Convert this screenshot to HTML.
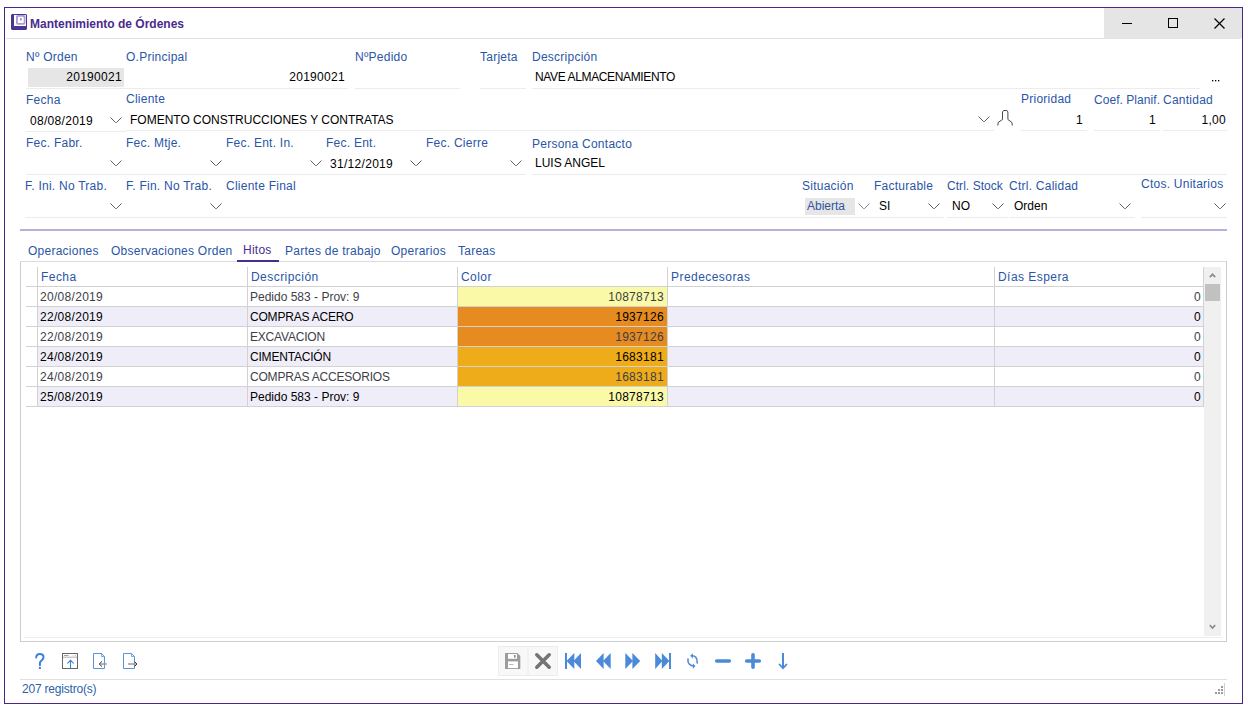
<!DOCTYPE html>
<html><head><meta charset="utf-8">
<style>
html,body{margin:0;padding:0;background:#fff;width:1248px;height:708px;overflow:hidden;position:relative;font-family:"Liberation Sans",sans-serif;}
.a{position:absolute}
.t{position:absolute;font-size:12px;line-height:14px;white-space:nowrap;color:#000}
.l{color:#2a55a8;letter-spacing:0.25px}
.r{text-align:right}
.ul{position:absolute;height:1px;background:#ececec}
.arr{position:absolute;width:12px;height:6px;overflow:visible}
.hl{position:absolute;height:1px;background:#d2d2d2}
.vl{position:absolute;width:1px;background:#d2d2d2}
.row{position:absolute;left:38px;width:1165px;height:19px}
.ev{background:#efeef8}
.g{color:#3e3e48}
.n{letter-spacing:0.3px}
</style></head><body>
<!-- window frame -->
<div class="a" style="left:4px;top:7px;width:1237px;height:695px;border:1px solid #4b2588;"></div>
<div class="a" style="left:1104px;top:8px;width:138px;height:30px;background:#e5e5e5"></div>
<div class="a" style="left:6px;top:38px;width:1235px;height:1px;background:#e3e3e3"></div>
<!-- title icon -->
<svg class="a" style="left:11px;top:14px" width="16" height="16" viewBox="0 0 16 16">
<path d="M1 0H15L16 1V15L15 16H1L0 15V1Z" fill="#4a3590"/>
<rect x="3" y="1" width="12" height="11" fill="#fff"/>
<rect x="5" y="1" width="9.5" height="9.7" rx="1.8" fill="#ad9bd6"/>
<rect x="6.8" y="2.8" width="5.9" height="6.3" rx="1.2" fill="#fff"/>
<rect x="9" y="4" width="1.7" height="2.5" fill="#a591cf"/>
</svg>
<div class="t" style="left:30px;top:17px;font-weight:bold;color:#4a2b8e">Mantenimiento de Órdenes</div>
<!-- window buttons -->
<div class="a" style="left:1122px;top:23px;width:10px;height:1px;background:#000"></div>
<div class="a" style="left:1168px;top:18px;width:8px;height:8px;border:1px solid #000"></div>
<svg class="a" style="left:1214px;top:18px" width="11" height="11" viewBox="0 0 11 11"><path d="M0.5 0.5L10.5 10.5M10.5 0.5L0.5 10.5" stroke="#000" stroke-width="1.2"/></svg>

<!-- Row 1 -->
<div class="t l" style="left:26px;top:50px">Nº Orden</div>
<div class="t l" style="left:126px;top:50px">O.Principal</div>
<div class="t l" style="left:355px;top:50px">NºPedido</div>
<div class="t l" style="left:480px;top:50px">Tarjeta</div>
<div class="t l" style="left:532px;top:50px">Descripción</div>
<div class="a" style="left:28px;top:68px;width:96px;height:19px;background:#e6e6e6"></div>
<div class="t r n" style="left:28px;width:94px;top:70px">20190021</div>
<div class="t r n" style="left:126px;width:219px;top:70px">20190021</div>
<div class="t" style="left:535px;top:70px;letter-spacing:-0.37px">NAVE ALMACENAMIENTO</div>
<svg class="a" style="left:1212px;top:80px" width="8" height="2"><rect x="0" y="0" width="1.3" height="1.3" fill="#000"/><rect x="3" y="0" width="1.3" height="1.3" fill="#000"/><rect x="6" y="0" width="1.3" height="1.3" fill="#000"/></svg>
<div class="ul" style="left:26px;top:88px;width:322px"></div>
<div class="ul" style="left:355px;top:88px;width:105px"></div>
<div class="ul" style="left:480px;top:88px;width:46px"></div>
<div class="ul" style="left:532px;top:88px;width:668px"></div>

<!-- Row 2 -->
<div class="t l" style="left:26px;top:93px">Fecha</div>
<div class="t l" style="left:126px;top:92px">Cliente</div>
<div class="t l" style="left:1021px;top:92px">Prioridad</div>
<div class="t l" style="left:1094px;top:93px;letter-spacing:0.05px">Coef. Planif.</div>
<div class="t l" style="left:1163px;top:93px">Cantidad</div>
<div class="t n" style="left:30px;top:114px">08/08/2019</div>
<div class="t" style="left:130px;top:113px">FOMENTO CONSTRUCCIONES Y CONTRATAS</div>
<div class="t r n" style="left:1022px;width:61px;top:113px">1</div>
<div class="t r n" style="left:1095px;width:61px;top:113px">1</div>
<div class="t r n" style="left:1165px;width:61px;top:113px">1,00</div>
<svg class="a" style="left:996px;top:109px" width="18" height="18" viewBox="996 109 18 18"><path d="M1002.5 119.5V112L1003.5 110.5H1007L1007.9 112V119.5L1011.8 122.3L1012.3 125.5M1002.5 119.5L998.3 122.3L997.8 125.5" fill="none" stroke="#484848" stroke-width="1"/></svg>
<div class="ul" style="left:26px;top:131px;width:100px"></div>
<div class="ul" style="left:126px;top:130px;width:868px"></div>
<div class="ul" style="left:1021px;top:130px;width:66px"></div>
<div class="ul" style="left:1094px;top:130px;width:66px"></div>
<div class="ul" style="left:1163px;top:130px;width:64px"></div>

<!-- Row 3 -->
<div class="t l" style="left:26px;top:136px">Fec. Fabr.</div>
<div class="t l" style="left:126px;top:136px">Fec. Mtje.</div>
<div class="t l" style="left:226px;top:136px">Fec. Ent. In.</div>
<div class="t l" style="left:326px;top:136px">Fec. Ent.</div>
<div class="t l" style="left:426px;top:136px">Fec. Cierre</div>
<div class="t l" style="left:532px;top:137px">Persona Contacto</div>
<div class="t n" style="left:330px;top:157px">31/12/2019</div>
<div class="t" style="left:535px;top:156px">LUIS ANGEL</div>
<div class="ul" style="left:26px;top:174px;width:500px"></div>
<div class="ul" style="left:532px;top:174px;width:695px"></div>

<!-- arrows -->
<svg class="arr" style="left:110px;top:117px"><path d="M0.5 0.5L5.5 5.5H6.5L11.5 0.5" fill="none" stroke="#5e5e5e" stroke-width="1"/></svg>
<svg class="arr" style="left:978px;top:116px"><path d="M0.5 0.5L5.5 5.5H6.5L11.5 0.5" fill="none" stroke="#5e5e5e" stroke-width="1"/></svg>
<svg class="arr" style="left:110px;top:160px"><path d="M0.5 0.5L5.5 5.5H6.5L11.5 0.5" fill="none" stroke="#5e5e5e" stroke-width="1"/></svg>
<svg class="arr" style="left:210px;top:160px"><path d="M0.5 0.5L5.5 5.5H6.5L11.5 0.5" fill="none" stroke="#5e5e5e" stroke-width="1"/></svg>
<svg class="arr" style="left:310px;top:160px"><path d="M0.5 0.5L5.5 5.5H6.5L11.5 0.5" fill="none" stroke="#5e5e5e" stroke-width="1"/></svg>
<svg class="arr" style="left:410px;top:160px"><path d="M0.5 0.5L5.5 5.5H6.5L11.5 0.5" fill="none" stroke="#5e5e5e" stroke-width="1"/></svg>
<svg class="arr" style="left:510px;top:160px"><path d="M0.5 0.5L5.5 5.5H6.5L11.5 0.5" fill="none" stroke="#5e5e5e" stroke-width="1"/></svg>
<svg class="arr" style="left:110px;top:203px"><path d="M0.5 0.5L5.5 5.5H6.5L11.5 0.5" fill="none" stroke="#5e5e5e" stroke-width="1"/></svg>
<svg class="arr" style="left:210px;top:203px"><path d="M0.5 0.5L5.5 5.5H6.5L11.5 0.5" fill="none" stroke="#5e5e5e" stroke-width="1"/></svg>
<svg class="arr" style="left:858px;top:203px"><path d="M0.5 0.5L5.5 5.5H6.5L11.5 0.5" fill="none" stroke="#808080" stroke-width="1"/></svg>
<svg class="arr" style="left:928px;top:203px"><path d="M0.5 0.5L5.5 5.5H6.5L11.5 0.5" fill="none" stroke="#5e5e5e" stroke-width="1"/></svg>
<svg class="arr" style="left:992px;top:203px"><path d="M0.5 0.5L5.5 5.5H6.5L11.5 0.5" fill="none" stroke="#5e5e5e" stroke-width="1"/></svg>
<svg class="arr" style="left:1119px;top:203px"><path d="M0.5 0.5L5.5 5.5H6.5L11.5 0.5" fill="none" stroke="#5e5e5e" stroke-width="1"/></svg>
<svg class="arr" style="left:1214px;top:203px"><path d="M0.5 0.5L5.5 5.5H6.5L11.5 0.5" fill="none" stroke="#5e5e5e" stroke-width="1"/></svg>
<!-- Row 4 -->
<div class="t l" style="left:25px;top:179px">F. Ini. No Trab.</div>
<div class="t l" style="left:126px;top:179px">F. Fin. No Trab.</div>
<div class="t l" style="left:226px;top:179px">Cliente Final</div>
<div class="t l" style="left:802px;top:179px">Situación</div>
<div class="t l" style="left:874px;top:179px">Facturable</div>
<div class="t l" style="left:947px;top:179px;letter-spacing:0.05px">Ctrl. Stock</div>
<div class="t l" style="left:1009px;top:179px">Ctrl. Calidad</div>
<div class="t l" style="left:1141px;top:177px">Ctos. Unitarios</div>
<div class="a" style="left:805px;top:198px;width:50px;height:17px;background:#e6e6e6"></div>
<div class="t" style="left:807px;top:199px;color:#2f55a0">Abierta</div>
<div class="t" style="left:879px;top:199px">SI</div>
<div class="t" style="left:952px;top:199px">NO</div>
<div class="t" style="left:1014px;top:199px">Orden</div>
<div class="ul" style="left:25px;top:217px;width:101px"></div>
<div class="ul" style="left:126px;top:217px;width:100px"></div>
<div class="ul" style="left:226px;top:217px;width:575px"></div>
<div class="ul" style="left:790px;top:217px;width:154px"></div>
<div class="ul" style="left:947px;top:217px;width:61px"></div>
<div class="ul" style="left:1009px;top:217px;width:126px"></div>
<div class="ul" style="left:1141px;top:217px;width:86px"></div>
<div class="a" style="left:20px;top:229px;width:1207px;height:2px;background:#bcaed8"></div>

<!-- Tabs -->
<div class="t l" style="left:28px;top:244px;letter-spacing:0.25px">Operaciones</div>
<div class="t l" style="left:111px;top:244px;letter-spacing:0.25px">Observaciones Orden</div>
<div class="t" style="left:243px;top:243px;color:#4a2b8e;letter-spacing:0.25px">Hitos</div>
<div class="t l" style="left:285px;top:244px;letter-spacing:0.25px">Partes de trabajo</div>
<div class="t l" style="left:391px;top:244px;letter-spacing:0.25px">Operarios</div>
<div class="t l" style="left:458px;top:244px;letter-spacing:0.25px">Tareas</div>

<!-- GRID -->
<div class="a" style="left:20px;top:261px;width:1205px;height:379px;border:1px solid #cdcdcd;border-top-color:#dcdcdc"></div>
<div class="t l" style="left:41px;top:270px;letter-spacing:0.45px">Fecha</div>
<div class="t l" style="left:251px;top:270px;letter-spacing:0.45px">Descripción</div>
<div class="t l" style="left:461px;top:270px;letter-spacing:0.45px">Color</div>
<div class="t l" style="left:671px;top:270px;letter-spacing:0.45px">Predecesoras</div>
<div class="t l" style="left:998px;top:270px;letter-spacing:0.45px">Días Espera</div>
<div class="a" style="left:458px;top:287px;width:209px;height:19px;background:#f9f9a8"></div>
<div class="t g n" style="left:40px;top:290px">20/08/2019</div>
<div class="t g" style="left:250px;top:290px">Pedido 583 - Prov: 9</div>
<div class="t g r n" style="left:458px;width:206px;top:290px">10878713</div>
<div class="t g r n" style="left:996px;width:205px;top:290px">0</div>
<div class="a ev" style="left:38px;top:307px;width:1165px;height:19px"></div>
<div class="a" style="left:458px;top:307px;width:209px;height:19px;background:#e58b1f"></div>
<div class="t n" style="left:40px;top:310px">22/08/2019</div>
<div class="t" style="left:250px;top:310px;letter-spacing:-0.2px">COMPRAS ACERO</div>
<div class="t r n" style="left:458px;width:206px;top:310px">1937126</div>
<div class="t r n" style="left:996px;width:205px;top:310px">0</div>
<div class="a" style="left:458px;top:327px;width:209px;height:19px;background:#e58b1f"></div>
<div class="t g n" style="left:40px;top:330px">22/08/2019</div>
<div class="t g" style="left:250px;top:330px;letter-spacing:-0.2px">EXCAVACION</div>
<div class="t g r n" style="left:458px;width:206px;top:330px">1937126</div>
<div class="t g r n" style="left:996px;width:205px;top:330px">0</div>
<div class="a ev" style="left:38px;top:347px;width:1165px;height:19px"></div>
<div class="a" style="left:458px;top:347px;width:209px;height:19px;background:#eeac1b"></div>
<div class="t n" style="left:40px;top:350px">24/08/2019</div>
<div class="t" style="left:250px;top:350px;letter-spacing:-0.2px">CIMENTACIÓN</div>
<div class="t r n" style="left:458px;width:206px;top:350px">1683181</div>
<div class="t r n" style="left:996px;width:205px;top:350px">0</div>
<div class="a" style="left:458px;top:367px;width:209px;height:19px;background:#eeac1b"></div>
<div class="t g n" style="left:40px;top:370px">24/08/2019</div>
<div class="t g" style="left:250px;top:370px;letter-spacing:-0.2px">COMPRAS ACCESORIOS</div>
<div class="t g r n" style="left:458px;width:206px;top:370px">1683181</div>
<div class="t g r n" style="left:996px;width:205px;top:370px">0</div>
<div class="a ev" style="left:38px;top:387px;width:1165px;height:19px"></div>
<div class="a" style="left:458px;top:387px;width:209px;height:19px;background:#f9f9a8"></div>
<div class="t n" style="left:40px;top:390px">25/08/2019</div>
<div class="t" style="left:250px;top:390px">Pedido 583 - Prov: 9</div>
<div class="t r n" style="left:458px;width:206px;top:390px">10878713</div>
<div class="t r n" style="left:996px;width:205px;top:390px">0</div>
<div class="hl" style="left:26px;top:286px;width:1178px"></div>
<div class="hl" style="left:26px;top:306px;width:1178px"></div>
<div class="hl" style="left:26px;top:326px;width:1178px"></div>
<div class="hl" style="left:26px;top:346px;width:1178px"></div>
<div class="hl" style="left:26px;top:366px;width:1178px"></div>
<div class="hl" style="left:26px;top:386px;width:1178px"></div>
<div class="hl" style="left:26px;top:406px;width:1178px"></div>
<div class="vl" style="left:37px;top:267px;height:140px"></div>
<div class="vl" style="left:247px;top:267px;height:140px"></div>
<div class="vl" style="left:457px;top:267px;height:140px"></div>
<div class="vl" style="left:667px;top:267px;height:140px"></div>
<div class="vl" style="left:994px;top:267px;height:140px"></div>
<div class="vl" style="left:1203px;top:267px;height:140px"></div>
<div class="a" style="left:1204px;top:267px;width:17px;height:369px;background:#f0f0f0"></div>
<svg class="a" style="left:1208px;top:272px" width="9" height="7" viewBox="0 0 9 7"><path d="M1.8 5.2L4.5 2.3L7.2 5.2" fill="none" stroke="#8c8c8c" stroke-width="1.7"/></svg>
<div class="a" style="left:1205px;top:284px;width:15px;height:17px;background:#c1c1c1"></div>
<svg class="a" style="left:1208px;top:623px" width="9" height="7" viewBox="0 0 9 7"><path d="M1.8 2.2L4.5 5.1L7.2 2.2" fill="none" stroke="#8c8c8c" stroke-width="1.7"/></svg>
<div class="a" style="left:24px;top:637px;width:1198px;height:1px;background:#ececec"></div>
<!-- /GRID -->
<div class="a" style="left:237px;top:260px;width:42px;height:2px;background:#4a2b8e"></div>

<!-- toolbar -->
<svg class="a" style="left:0;top:640px" width="1248" height="68" viewBox="0 640 1248 68">
<!-- help ? -->
<path d="M36.2 657.6C36.2 655.2 37.9 653.9 39.8 653.9C41.9 653.9 43.5 655.3 43.5 657.3C43.5 659.3 41.8 660.1 40.8 661.2C40.1 661.9 39.9 662.6 39.9 663.6L39.9 665.2" fill="none" stroke="#3f80d6" stroke-width="2" stroke-linecap="round"/>
<rect x="38.9" y="667" width="2" height="2" fill="#3f80d6"/>
<!-- window upload -->
<rect x="62.5" y="653.5" width="15" height="15" fill="none" stroke="#666" stroke-width="1"/>
<rect x="63" y="656.6" width="14" height="1.3" fill="#c4c4c4"/>
<rect x="64" y="655" width="4.5" height="0.8" fill="#888"/>
<rect x="72.5" y="655.6" width="1" height="0.6" fill="#aaa"/><rect x="75" y="655.2" width="1" height="1" fill="#aaa"/>
<path d="M70.5 668.6L70.5 660.3M67.7 663.1L70.5 660.3L73.3 663.1" fill="none" stroke="#3f80d6" stroke-width="1.1" stroke-linecap="round"/>
<!-- doc left -->
<path d="M93.5 653.5L101.5 653.5L104.5 656.5L104.5 668.5L93.5 668.5Z" fill="none" stroke="#5a93de" stroke-width="1"/>
<path d="M101.5 653.5L101.5 656.5L104.5 656.5" fill="none" stroke="#5a93de" stroke-width="0.8"/>
<path d="M99.5 664L106.8 664" stroke="#9a9a9a" stroke-width="1.5"/>
<path d="M102 661.3L99.2 664L102 666.7" fill="none" stroke="#404040" stroke-width="1"/>
<!-- doc right -->
<path d="M123.5 653.5L131.5 653.5L134.5 656.5L134.5 668.5L123.5 668.5Z" fill="none" stroke="#5a93de" stroke-width="1"/>
<path d="M131.5 653.5L131.5 656.5L134.5 656.5" fill="none" stroke="#5a93de" stroke-width="0.8"/>
<path d="M128 664L136.3 664" stroke="#9a9a9a" stroke-width="1.5"/>
<path d="M134.3 661.3L137 664L134.3 666.7" fill="none" stroke="#404040" stroke-width="1"/>
<!-- buttons -->
<rect x="498.5" y="646.5" width="59" height="29" fill="#f8f8f8" stroke="#ececec" stroke-width="1"/>
<rect x="527.5" y="647" width="1" height="28" fill="#ececec"/>
<!-- save -->
<path d="M505 653L517.3 653L520.3 656L520.3 669L505 669Z" fill="#9c9c9c"/>
<rect x="508" y="654" width="9" height="4.8" fill="#fff"/>
<rect x="514" y="655" width="1.6" height="2.7" fill="#8a8a8a"/>
<rect x="508" y="661.4" width="10" height="6.7" fill="#fff"/>
<rect x="509" y="664" width="4.5" height="0.9" fill="#b0b0b0"/>
<!-- X -->
<path d="M536.8 654.8L549.2 667.2M549.2 654.8L536.8 667.2" stroke="#747474" stroke-width="3.6" stroke-linecap="round"/>
<!-- first -->
<g fill="#4a8ad8">
<rect x="565" y="653" width="2" height="16"/>
<path d="M566.5 661L574.3 653L574.3 669Z"/>
<path d="M573.5 661L581 653L581 669Z"/>
<!-- prev -->
<path d="M596 661L603.6 653L603.6 669Z"/>
<path d="M603 661L610.7 653L610.7 669Z"/>
<!-- next -->
<path d="M625.3 653L633 661L625.3 669Z"/>
<path d="M632.4 653L640.2 661L632.4 669Z"/>
<!-- last -->
<path d="M655.2 653L662.4 661L655.2 669Z"/>
<path d="M661.8 653L669.4 661L661.8 669Z"/>
<rect x="669" y="653" width="2" height="16"/>
</g>
<!-- refresh -->
<path d="M691.5 655.8C695 655.3 697.6 658 697.2 663" fill="none" stroke="#4a8ad8" stroke-width="1.6" stroke-linecap="round"/>
<path d="M690.2 655.8L692.8 653.2L692.8 658.6Z" fill="#4a8ad8"/>
<path d="M688 659C687.3 663 690 666 694 666" fill="none" stroke="#4a8ad8" stroke-width="1.6" stroke-linecap="round"/>
<path d="M695.4 666L692.9 663.4L692.9 668.7Z" fill="#4a8ad8"/>
<!-- minus -->
<path d="M716.7 661L729.3 661" stroke="#4a8ad8" stroke-width="3.6" stroke-linecap="round"/>
<!-- plus -->
<path d="M746.7 661L759.3 661M753 654.7L753 667.3" stroke="#4a8ad8" stroke-width="3.6" stroke-linecap="round"/>
<!-- down -->
<path d="M783 653L783 668" stroke="#4a8ad8" stroke-width="2"/>
<path d="M779.5 664.5L783 668.2L786.5 664.5" fill="none" stroke="#4a8ad8" stroke-width="1.8" stroke-linecap="round"/>
<!-- grip -->
<g fill="#9a9a9a">
<rect x="1221" y="686" width="2" height="2"/>
<rect x="1218" y="689" width="2" height="2"/><rect x="1221" y="689" width="2" height="2"/>
<rect x="1215" y="692" width="2" height="2"/><rect x="1218" y="692" width="2" height="2"/><rect x="1221" y="692" width="2" height="2"/>
</g>
<rect x="1224" y="683" width="1" height="13" fill="#d0d0d0"/>
</svg>
<!-- footer -->
<div class="a" style="left:20px;top:679px;width:1207px;height:1px;background:#e0e0e0"></div>
<div class="t" style="left:22px;top:682px;color:#2d5fa9;letter-spacing:-0.2px">207 registro(s)</div>
</body></html>
